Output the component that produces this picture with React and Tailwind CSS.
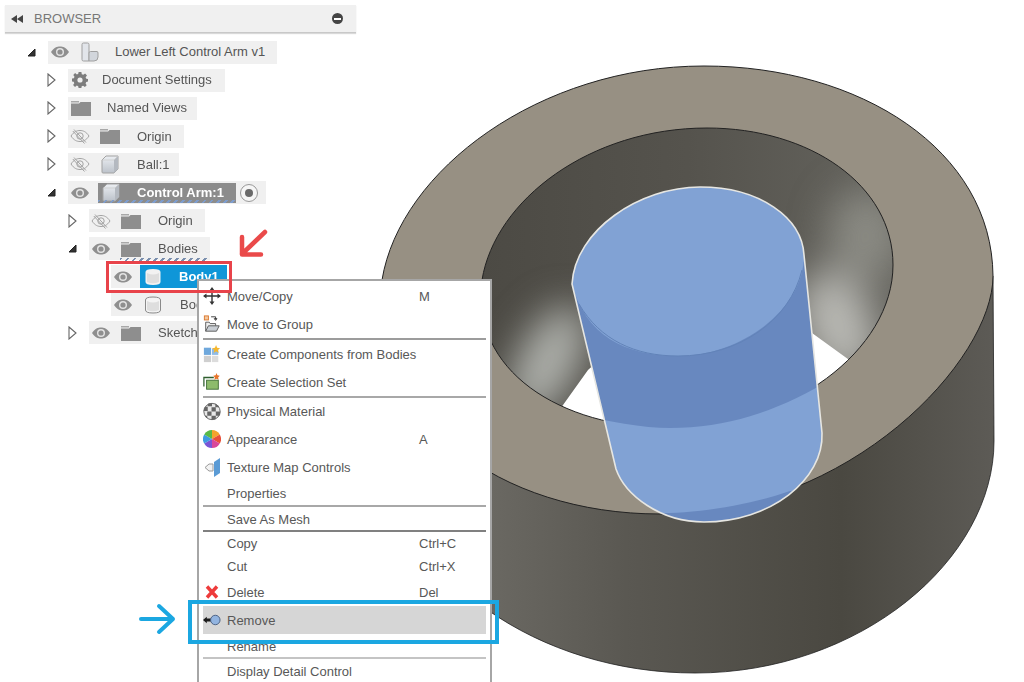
import React from 'react'

// tree icons
const Eye = () => (
  <svg width="20" height="14" viewBox="0 0 20 14">
    <path d="M1 7C4 2.5 7 1.5 10 1.5S16 2.5 19 7C16 11.5 13 12.5 10 12.5S4 11.5 1 7Z" fill="#8f8f8f" />
    <circle cx="10" cy="7" r="4" fill="#e4e4e4" />
    <circle cx="10" cy="7" r="2.6" fill="#8f8f8f" />
  </svg>
)

const EyeOff = () => (
  <svg width="20" height="16" viewBox="0 0 20 16" fill="none" stroke="#a3a3a3" strokeWidth="1">
    <path d="M1 8C4 3.5 7 2.5 10 2.5S16 3.5 19 8C16 12.5 13 13.5 10 13.5S4 12.5 1 8Z" />
    <circle cx="10" cy="8" r="3.2" />
    <path d="M4 1.5 16 14.5M2.8 3 14.5 15.5" />
  </svg>
)

const Folder = () => (
  <svg width="20" height="16" viewBox="0 0 20 16">
    <path d="M0 1H8V2.5H0Z" fill="#a8a8a8" />
    <path d="M0 3.5H8L9.5 2H20V16H0Z" fill="#8e8e8e" />
  </svg>
)

const Gear = () => (
  <svg width="16" height="16" viewBox="0 0 16 16">
    <path
      d="M6.6 0H9.4L9.8 2.2 11.3 2.8 13.1 1.5 15 3.4 13.6 5.2 14.3 6.7 16 7V9.5L14.2 10 13.6 11.4 14.7 13.2 12.9 15 11.1 13.8 9.7 14.3 9.4 16H6.6L6.2 14.2 4.8 13.6 3 14.9 1.1 13 2.3 11.2 1.7 9.8 0 9.4V6.6L1.9 6.2 2.5 4.7 1.3 3 3.1 1.1 4.9 2.4 6.3 1.8Z"
      fill="#7d7d7d"
    />
    <circle cx="8" cy="8" r="2.6" fill="#f0f0f0" />
  </svg>
)

const Assembly = () => (
  <svg width="18" height="20" viewBox="0 0 18 20">
    <path d="M1 2.5Q1 1 2.5 1H6.5Q8 1 8 2.5V19H2.5Q1 19 1 17.5Z" fill="#e2e5ea" stroke="#a0a0a0" />
    <path d="M8 11Q8 9.5 9.5 9.5H16Q17 9.5 17 11V15Q17 19 13 19H8Z" fill="#d2d6dc" stroke="#a0a0a0" />
  </svg>
)

const Cube = () => (
  <svg width="18" height="19" viewBox="0 0 18 19">
    <defs>
      <linearGradient id="cubeFace" x1="0" y1="0" x2="0" y2="1">
        <stop offset="0" stopColor="#eceff3" />
        <stop offset="1" stopColor="#bcc2ca" />
      </linearGradient>
    </defs>
    <path d="M1 5 5 1H17V14L13 18H2Q1 18 1 17Z" fill="url(#cubeFace)" stroke="#a2a2a2" />
    <path d="M13 5V18L17 14V1Z" fill="#b4b9c0" />
    <path d="M1 5H13L17 1" fill="none" stroke="#c8c8c8" strokeWidth="0.7" />
  </svg>
)

const Cyl = ({outline}) => (
  <svg width="18" height="18" viewBox="0 0 18 18">
    <path
      d="M1.5 4Q1.5 1 9 1T16.5 4V14Q16.5 17 9 17T1.5 14Z"
      fill={outline ? '#f4f4f4' : '#f2f2f2'}
      stroke={outline ? '#8a8a8a' : 'none'}
    />
    <path d="M3 5Q9 8 15 5V14Q9 16.5 3 14Z" fill="#dedede" />
  </svg>
)

const Open = () => (
  <svg width="9" height="9" viewBox="0 0 9 9">
    <path d="M1 8 8 1V8Z" fill="#333" stroke="#222" />
  </svg>
)

const Closed = () => (
  <svg width="9" height="14" viewBox="0 0 9 14">
    <path d="M1 1 8 7 1 13Z" fill="#fff" stroke="#666" strokeWidth="1.1" />
  </svg>
)

// menu icons
const MoveIcon = () => (
  <svg width="18" height="18" viewBox="0 0 18 18" fill="#333">
    <path d="M8.3 3H9.7V15H8.3ZM3 8.3H15V9.7H3Z" />
    <path d="M9 0 11.5 3.5H6.5ZM9 18 6.5 14.5H11.5ZM0 9 3.5 6.5V11.5ZM18 9 14.5 11.5V6.5Z" />
  </svg>
)

const GroupIcon = () => (
  <svg width="20" height="20" viewBox="0 0 20 20">
    <rect x="1.5" y="1" width="4.5" height="4.5" fill="#f4c9a0" stroke="#d9752b" />
    <path d="M9 2H14V5M14 6 12.5 4H15.5Z" fill="none" stroke="#333" />
    <path d="M3 18V8H7L8 9.5H14V12" fill="#eee" stroke="#555" />
    <path d="M3 18 6 12H18L15 18Z" fill="#c9ced4" stroke="#555" />
  </svg>
)

const ComponentsIcon = () => (
  <svg width="20" height="20" viewBox="0 0 20 20">
    <rect x="1" y="3" width="8" height="8" fill="#6fa8dc" />
    <rect x="10" y="4" width="7" height="7" fill="#8fbbe6" />
    <rect x="1" y="12" width="8" height="7" fill="#cfcfcf" />
    <rect x="10" y="12" width="7" height="7" fill="#dcdcdc" />
    <path d="M14.5 0 15.7 3 19 3.5 16.5 5.5 17.5 9 14.5 7 11.8 9 12.5 5.5 10 3.5 13.3 3Z" fill="#f6b72c" />
  </svg>
)

const SelectionIcon = () => (
  <svg width="20" height="20" viewBox="0 0 20 20">
    <path d="M1 15V5H12" fill="none" stroke="#2f5f2f" strokeWidth="1.4" />
    <rect x="4" y="8" width="13" height="10" fill="#8dbb6c" stroke="#3c6b33" />
    <path d="M15 0 16 2.5 18.6 3 16.8 5 17.4 7.6 15 6.4 12.6 7.6 13.2 5 11.4 3 14 2.5Z" fill="#e8752b" />
  </svg>
)

const MaterialIcon = () => (
  <svg width="19" height="19" viewBox="0 0 19 19">
    <defs>
      <clipPath id="matClip">
        <circle cx="9.5" cy="9.5" r="9" />
      </clipPath>
    </defs>
    <circle cx="9.5" cy="9.5" r="9" fill="#e8e8e8" />
    <g clipPath="url(#matClip)" fill="#666">
      <rect x="5" y="0" width="4.5" height="4" />
      <rect x="13" y="1" width="4.5" height="4" />
      <rect x="0" y="4.5" width="5" height="4.5" />
      <rect x="9" y="5" width="4.5" height="4.5" />
      <rect x="4.5" y="9.5" width="4.5" height="4.5" />
      <rect x="13.5" y="9.5" width="5" height="4.5" />
      <rect x="0" y="14" width="4.5" height="5" />
      <rect x="9" y="14" width="4.5" height="5" />
    </g>
    <circle cx="9.5" cy="9.5" r="8.6" fill="none" stroke="#666" />
  </svg>
)

const AppearanceIcon = () => (
  <svg width="18" height="18" viewBox="0 0 18 18">
    <path d="M9 9V0A9 9 0 0 1 16.8 4.5Z" fill="#f4a42c" />
    <path d="M9 9 16.8 4.5A9 9 0 0 1 16.8 13.5Z" fill="#e8503a" />
    <path d="M9 9 16.8 13.5A9 9 0 0 1 9 18Z" fill="#d9479a" />
    <path d="M9 9V18A9 9 0 0 1 1.2 13.5Z" fill="#7a55d6" />
    <path d="M9 9 1.2 13.5A9 9 0 0 1 1.2 4.5Z" fill="#3f9be0" />
    <path d="M9 9 1.2 4.5A9 9 0 0 1 9 0Z" fill="#58b947" />
  </svg>
)

const TextureIcon = () => (
  <svg width="17" height="19" viewBox="0 0 17 19">
    <path d="M10 4 16 0V15L10 19Z" fill="#5b9bd5" />
    <path d="M1 9.5 5 6H9V13H5Z" fill="#f2f2f2" stroke="#9a9a9a" />
  </svg>
)

const DeleteIcon = () => (
  <svg width="14" height="14" viewBox="0 0 14 14">
    <path d="M2 1.5 12 12.5M12 1.5 2 12.5" stroke="#ee3b3b" strokeWidth="3.4" />
  </svg>
)

const RemoveIcon = () => (
  <svg width="19" height="12" viewBox="0 0 19 12">
    <path d="M0 6 4 2.5V4.5H9V7.5H4V9.5Z" fill="#1c1c1c" />
    <circle cx="13" cy="6" r="5" fill="#92b4e0" stroke="#4a5f80" />
  </svg>
)

const tree = [
  {caret: 'open', indent: 'pl-[27px]', pill: 'w-[229px]', eye: 'on', icon: <Assembly />, text: 'ml-[7px]', label: 'Lower Left Control Arm v1'},
  {caret: 'closed', indent: 'pl-[47px]', pill: 'w-[157px]', icon: <Gear />, iconSlot: 'w-6', text: 'ml-[10px]', label: 'Document Settings'},
  {caret: 'closed', indent: 'pl-[47px]', pill: 'w-[129px]', icon: <Folder />, iconSlot: 'w-[26px]', text: 'ml-[13px]', label: 'Named Views'},
  {caret: 'closed', indent: 'pl-[47px]', pill: 'w-[116px]', eye: 'off', icon: <Folder />, label: 'Origin'},
  {caret: 'closed', indent: 'pl-[47px]', pill: 'w-[111px]', eye: 'off', icon: <Cube />, label: 'Ball:1'},
  {caret: 'open', indent: 'pl-[47px]', pill: 'w-[198px]', eye: 'on', icon: <Cube />, label: 'Control Arm:1', active: true},
  {caret: 'closed', indent: 'pl-[68px]', pill: 'w-[116px]', eye: 'off', icon: <Folder />, label: 'Origin'},
  {caret: 'open', indent: 'pl-[68px]', pill: 'w-[121px]', eye: 'on', icon: <Folder />, label: 'Bodies', wavy: true},
  {indent: 'pl-[90px]', pill: 'w-[116px]', eye: 'on', icon: <Cyl />, label: 'Body1', selected: true},
  {indent: 'pl-[90px]', pill: 'w-[120px]', eye: 'on', icon: <Cyl outline />, label: 'Body2'},
  {caret: 'closed', indent: 'pl-[68px]', pill: 'w-[140px]', eye: 'on', icon: <Folder />, label: 'Sketches'},
]

const menu = [
  {h: 'h-7', icon: <MoveIcon />, label: 'Move/Copy', key: 'M'},
  {h: 'h-7', icon: <GroupIcon />, label: 'Move to Group'},
  {sep: 'bg-[#9c9c9c]'},
  {h: 'h-7', icon: <ComponentsIcon />, label: 'Create Components from Bodies'},
  {h: 'h-7', icon: <SelectionIcon />, label: 'Create Selection Set'},
  {sep: 'bg-[#a8a8a8]'},
  {h: 'h-[26px]', icon: <MaterialIcon />, label: 'Physical Material'},
  {h: 'h-[29px]', icon: <AppearanceIcon />, label: 'Appearance', key: 'A'},
  {h: 'h-7', icon: <TextureIcon />, label: 'Texture Map Controls'},
  {h: 'h-6', label: 'Properties'},
  {sep: 'bg-[#a8a8a8]'},
  {h: 'h-[23px]', label: 'Save As Mesh'},
  {sep: 'bg-[#808080]'},
  {h: 'h-[22px]', label: 'Copy', key: 'Ctrl+C'},
  {h: 'h-6', label: 'Cut', key: 'Ctrl+X'},
  {h: 'h-7', icon: <DeleteIcon />, label: 'Delete', key: 'Del'},
  {h: 'h-7', icon: <RemoveIcon />, label: 'Remove', hover: true},
  {h: 'h-[23px]', label: 'Rename'},
  {sep: 'bg-[#c4c4c4]'},
  {h: 'h-6', label: 'Display Detail Control'},
]

function TreeRow({row}) {
  return (
    <div className={`flex h-[28.1px] items-center ${row.indent}`}>
      <span className="flex w-[21px] shrink-0 items-center">
        {row.caret === 'open' && <Open />}
        {row.caret === 'closed' && <Closed />}
      </span>
      <div className={`relative flex h-[23px] items-center bg-[#f0f0f0] text-[13px] whitespace-nowrap text-[#555] ${row.pill}`}>
        {row.eye && (
          <span className="flex w-6 shrink-0 justify-center">
            {row.eye === 'on' ? <Eye /> : <EyeOff />}
          </span>
        )}
        {row.active ? (
          <>
            <div className="relative ml-[6px] flex h-5 w-[138px] shrink-0 items-center bg-[#8c8c8c] font-bold text-white">
              <span className="ml-[3px] flex w-[19px] justify-center">{row.icon}</span>
              <span className="ml-[17px]">{row.label}</span>
              <span className="absolute right-0 bottom-0 left-0 h-[3px] bg-[repeating-linear-gradient(135deg,#7d9ccc_0_2px,transparent_2px_5px)]" />
            </div>
            <span className="ml-[4px] flex h-[18px] w-[18px] items-center justify-center rounded-full border border-[#999] bg-[#f6f6f6]">
              <span className="h-[8px] w-[8px] rounded-full bg-[#6a6a6a]" />
            </span>
          </>
        ) : row.selected ? (
          <div className="ml-[5px] flex h-full flex-1 items-center bg-[#0f96d8] font-bold text-white">
            <span className="ml-[3px] flex w-[19px] justify-center">{row.icon}</span>
            <span className="ml-[17px]">{row.label}</span>
          </div>
        ) : (
          <>
            <span className={`flex shrink-0 justify-center ${row.iconSlot || 'w-9'}`}>{row.icon}</span>
            <span className={row.text || 'ml-[9px]'}>{row.label}</span>
          </>
        )}
        {row.wavy && (
          <span className="absolute right-[2px] bottom-[-1px] left-[31px] h-[3px] bg-[repeating-linear-gradient(135deg,#7a8fae_0_2px,transparent_2px_5px)]" />
        )}
      </div>
    </div>
  )
}

function ContextMenu() {
  return (
    <div className="absolute top-[279px] left-[197px] h-[403px] w-[295px] overflow-hidden border-x-2 border-t-2 border-[#a6a6a6] bg-white px-[4px] pt-px text-[13px] text-[#585858]">
      {menu.map((item, i) =>
        item.sep ? (
          <div key={i} className={`h-[2px] ${item.sep}`} />
        ) : (
          <div key={i} className={`flex items-center ${item.h} ${item.hover ? 'bg-[#d6d6d6]' : ''}`}>
            <span className="mr-[6px] flex w-[18px] shrink-0 justify-center">{item.icon}</span>
            <span className="w-[192px] shrink-0 translate-y-px">{item.label}</span>
            <span className="translate-y-px">{item.key}</span>
          </div>
        )
      )}
    </div>
  )
}

// the part in the viewport, drawn by hand from its silhouette
function Model() {
  const topFace = 'M382 280C400 170 540 66 704 66C860 66 992 150 993 276C993 360 850 514 660 514C500 514 370 420 382 280Z'
  const innerHole = 'M482 280C495 200 590 128 707 128C810 128 893 185 893 265C893 350 790 428 670 428C560 428 470 370 482 280Z'
  const cylinder = 'M572 284C575 230 640 187 700 187C760 187 802 218 804 255L822 433C824 480 770 522 704 522C660 522 625 495 616 469Z'
  return (
    <svg className="absolute inset-0" width="1024" height="682" viewBox="0 0 1024 682">
      <defs>
        <linearGradient id="bodySide" gradientUnits="userSpaceOnUse" x1="380" y1="0" x2="995" y2="0">
          <stop offset="0.18" stopColor="#6a6862" />
          <stop offset="0.4" stopColor="#5a5852" />
          <stop offset="0.75" stopColor="#4a4841" />
          <stop offset="1" stopColor="#5d5b56" />
        </linearGradient>
        <linearGradient id="holeWall" gradientUnits="userSpaceOnUse" x1="482" y1="0" x2="893" y2="0">
          <stop offset="0" stopColor="#4c4a44" />
          <stop offset="0.5" stopColor="#55534d" />
          <stop offset="1" stopColor="#65645e" />
        </linearGradient>
        <clipPath id="holeClip">
          <path d={innerHole} />
        </clipPath>
        <clipPath id="cylClip">
          <path d={cylinder} />
        </clipPath>
        <filter id="soft" x="-100%" y="-100%" width="300%" height="300%">
          <feGaussianBlur stdDeviation="19" />
        </filter>
      </defs>

      <path
        d="M382 280V445C400 580 540 673 695 673C860 673 994 560 994 441L993 276Z"
        fill="url(#bodySide)"
        stroke="#222"
        strokeWidth="0.8"
      />
      <path d={topFace} fill="#979083" stroke="#222" strokeWidth="1" />

      <path d={innerHole} fill="url(#holeWall)" />
      <g clipPath="url(#holeClip)">
        <g filter="url(#soft)">
          <ellipse cx="548" cy="362" rx="30" ry="62" transform="rotate(28 548 362)" fill="#aeb0ab" />
          <ellipse cx="838" cy="325" rx="36" ry="56" transform="rotate(-22 838 325)" fill="#b8b8b3" />
          <ellipse cx="866" cy="235" rx="38" ry="46" fill="#8a8a83" />
        </g>
        <path d="M558 412 588 370C640 320 780 300 812 333L852 362V440H558Z" fill="#fff" />
      </g>
      <path d={innerHole} fill="none" stroke="#222" strokeWidth="1" />

      <path d={cylinder} fill="#6888bf" />
      <g clipPath="url(#cylClip)">
        <path d="M560 410C600 420 640 428 670 428C730 428 780 410 830 380V500L790 491C750 505 700 513 662 513L590 500Z" fill="#81a2d4" />
        <path d="M572 284C575 230 640 187 700 187C760 187 802 218 804 255C804 310 740 356 678 356C625 356 585 335 572 284Z" fill="#81a2d4" />
        <path d="M579 304C600 340 635 356 678 356C740 356 790 320 802 270" fill="none" stroke="#6283b8" strokeWidth="1" />
      </g>
      <path d={cylinder} fill="none" stroke="#e6e6e2" strokeWidth="1.6" />
    </svg>
  )
}

function Annotations() {
  return (
    <>
      <div className="absolute top-[261px] left-[106px] h-[32px] w-[126px] border-[3px] border-[#e8434a]" />
      <svg className="absolute top-[228px] left-[236px]" width="32" height="30" viewBox="0 0 32 30" fill="none" stroke="#ea4a4a" strokeWidth="4.5" strokeLinecap="round" strokeLinejoin="round">
        <path d="M29 4 6 26M6 9V26.5H25" />
      </svg>
      <div className="absolute top-[600px] left-[188px] h-[44px] w-[311px] border-[4px] border-[#1ba7e1]" />
      <svg className="absolute top-[603px] left-[138px]" width="38" height="32" viewBox="0 0 38 32" fill="none" stroke="#1ba7e1" strokeWidth="4" strokeLinecap="round" strokeLinejoin="round">
        <path d="M3 16H35M21 3 35 16 21 29" />
      </svg>
    </>
  )
}

export default function App() {
  return (
    <div className="relative h-[682px] w-[1024px] overflow-hidden bg-white font-['Liberation_Sans',Arial,sans-serif]">
      <Model />
      <div className="relative w-[360px] pt-[5px] pl-[5px]">
        <div className="flex h-[28px] w-[351px] items-center border-b border-[#c8c8c8] bg-[#f0f0f0] text-[13px] text-[#777] shadow-[0_1px_1px_rgba(0,0,0,0.15)]">
          <svg className="ml-[6px]" width="12" height="8" viewBox="0 0 12 8" fill="#444">
            <path d="M0 4 6 0V8ZM6 4 12 0V8Z" />
          </svg>
          <span className="ml-[11px]">BROWSER</span>
          <span className="ml-auto mr-[13px] flex h-[11px] w-[11px] items-center justify-center rounded-full bg-[#444]">
            <span className="h-[2px] w-[7px] bg-white" />
          </span>
        </div>
      </div>
      <div className="relative pt-[5px]">
        {tree.map((row) => (
          <TreeRow key={row.label + row.indent} row={row} />
        ))}
      </div>
      <ContextMenu />
      <Annotations />
    </div>
  )
}
